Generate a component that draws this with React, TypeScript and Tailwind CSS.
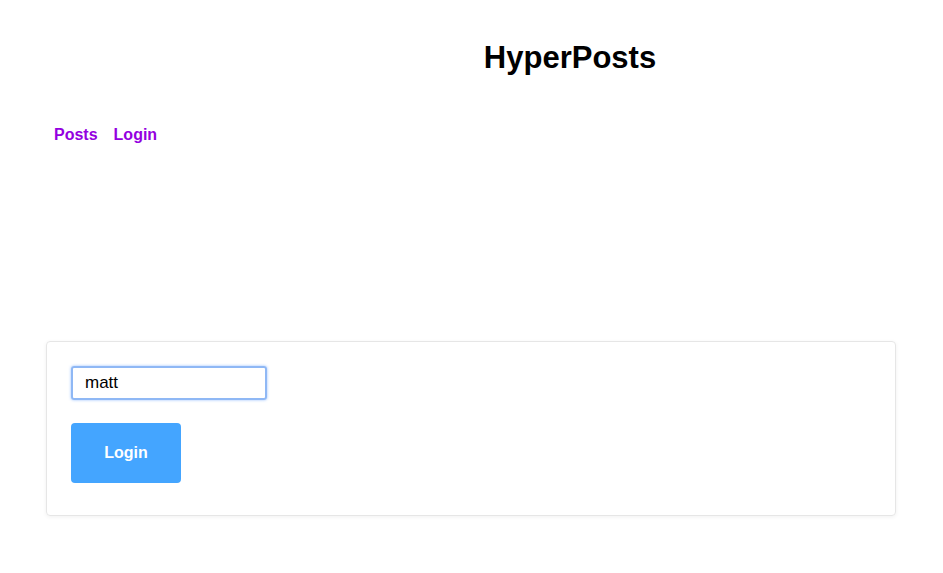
import React from "react";

export default function App() {
  return (
    <div className="w-[943px] h-[573px] bg-white text-black" style={{ fontFamily: '"Liberation Sans", Arial, sans-serif' }}>
      <header className="pt-[39px] pl-[197px] text-center">
        <h1 className="text-[31px] leading-[38px] font-bold">HyperPosts</h1>
      </header>
      <nav className="flex gap-[16px] pl-[54px] pt-[48px] text-[16px] leading-[20px] font-bold text-[#9400e0]">
        <a href="#">Posts</a>
        <a href="#">Login</a>
      </nav>
      <main className="px-[46px] pt-[196px]">
        <div className="w-[850px] rounded-[4px] border border-[#e6e6e6] shadow-[0_1px_4px_rgba(0,0,0,0.06)] px-[24px] pt-[24px] pb-[32px]">
          <input
            defaultValue="matt"
            className="block w-[196px] h-[34px] rounded-[3px] border-2 border-[#8fb8f5] shadow-[0_0_3px_rgba(80,150,255,0.6)] pl-[12px] text-[17px] outline-none"
          />
          <button className="mt-[23px] w-[110px] h-[60px] rounded-[4px] bg-[#44a5ff] text-white text-[16px] font-bold">
            Login
          </button>
        </div>
      </main>
    </div>
  );
}
